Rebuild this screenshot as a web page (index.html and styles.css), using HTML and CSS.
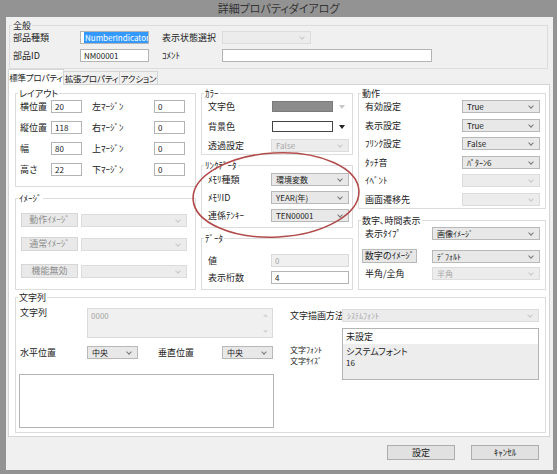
FILE: index.html
```html
<!DOCTYPE html>
<html lang="ja">
  <head>
    <meta charset="UTF-8" />
    <title>詳細プロパティダイアログ</title>
    <link rel="stylesheet" href="styles.css">
  </head>
  <body>
    <div class="window">
      <div class="titlebar">詳細プロパティダイアログ</div>
      <div class="dlg">
        <fieldset class="grp general">
          <legend>全般</legend>
          <div class="row gen-row">
            <span class="lbl w-gen">部品種類</span>
            <span class="tb w-gid"><span class="hl">NumberIndicator</span></span>
            <span class="lbl w-gen2">表示状態選択</span>
            <span class="sel dis w-state"></span>
          </div>
          <div class="row gen-row">
            <span class="lbl w-gen">部品ID</span>
            <span class="tb w-gid">NM00001</span>
            <span class="lbl w-gen2">ｺﾒﾝﾄ</span>
            <span class="tb w-comment"></span>
          </div>
        </fieldset>

        <div class="tabs">
          <span class="tab active t1">標準プロパティ</span>
          <span class="tab t2">拡張プロパティ</span>
          <span class="tab t3">アクション</span>
        </div>

        <div class="panel">
          <div class="cols">
            <div class="col col-left">
              <fieldset class="grp layout">
                <legend>レイアウト</legend>
                <div class="row"><span class="lbl w31">横位置</span><span class="tb w31">20</span><span class="lbl w62 ml10">左ﾏｰｼﾞﾝ</span><span class="tb w31">0</span></div>
                <div class="row"><span class="lbl w31">縦位置</span><span class="tb w31">118</span><span class="lbl w62 ml10">右ﾏｰｼﾞﾝ</span><span class="tb w31">0</span></div>
                <div class="row"><span class="lbl w31">幅</span><span class="tb w31">80</span><span class="lbl w62 ml10">上ﾏｰｼﾞﾝ</span><span class="tb w31">0</span></div>
                <div class="row"><span class="lbl w31">高さ</span><span class="tb w31">22</span><span class="lbl w62 ml10">下ﾏｰｼﾞﾝ</span><span class="tb w31">0</span></div>
              </fieldset>
              <fieldset class="grp image">
                <legend>ｲﾒｰｼﾞ</legend>
                <div class="row img-row"><span class="btn dis w57">動作ｲﾒｰｼﾞ</span><span class="sel dis w106"></span></div>
                <div class="row img-row r2"><span class="btn dis w57">通常ｲﾒｰｼﾞ</span><span class="sel dis w106"></span></div>
                <div class="row img-row r3"><span class="btn dis w57">機能無効</span><span class="sel dis w106"></span></div>
              </fieldset>
            </div>

            <div class="col col-mid">
              <fieldset class="grp color">
                <legend>ｶﾗｰ</legend>
                <div class="row"><span class="lbl w63">文字色</span><span class="cbox"><span class="swatch gray"></span><span class="tri light"></span></span></div>
                <div class="row r-c2"><span class="lbl w63">背景色</span><span class="cbox"><span class="swatch white"></span><span class="tri"></span></span></div>
                <div class="row r-c3"><span class="lbl w63">透過設定</span><span class="sel dis w78">False</span></div>
              </fieldset>
              <fieldset class="grp link">
                <legend>ﾘﾝｸﾃﾞｰﾀ</legend>
                <div class="row"><span class="lbl w63">ﾒﾓﾘ種類</span><span class="sel w78">環境変数</span></div>
                <div class="row"><span class="lbl w63">ﾒﾓﾘID</span><span class="sel w78">YEAR(年)</span></div>
                <div class="row"><span class="lbl w63">連係ﾃﾝｷｰ</span><span class="sel w78">TEN00001</span></div>
              </fieldset>
              <fieldset class="grp data">
                <legend>ﾃﾞｰﾀ</legend>
                <div class="row"><span class="lbl w63">値</span><span class="tb dis w78">0</span></div>
                <div class="row"><span class="lbl w63">表示桁数</span><span class="tb w78">4</span></div>
              </fieldset>
            </div>

            <div class="col col-right">
              <fieldset class="grp action">
                <legend>動作</legend>
                <div class="row"><span class="lbl w97">有効設定</span><span class="sel w78">True</span></div>
                <div class="row"><span class="lbl w97">表示設定</span><span class="sel w78">True</span></div>
                <div class="row"><span class="lbl w97">ﾌﾘﾝｸ設定</span><span class="sel w78">False</span></div>
                <div class="row"><span class="lbl w97">ﾀｯﾁ音</span><span class="sel w78">ﾊﾟﾀｰﾝ6</span></div>
                <div class="row"><span class="lbl w97">ｲﾍﾞﾝﾄ</span><span class="sel dis w78"></span></div>
                <div class="row"><span class="lbl w97">画面遷移先</span><span class="sel dis w78"></span></div>
              </fieldset>
              <fieldset class="grp digits">
                <legend>数字､時間表示</legend>
                <div class="row"><span class="lbl w67">表示ﾀｲﾌﾟ</span><span class="sel w108">画像ｲﾒｰｼﾞ</span></div>
                <div class="row btn-row"><span class="btn w55">数字のｲﾒｰｼﾞ</span><span class="sel w108">ﾃﾞﾌｫﾙﾄ</span></div>
                <div class="row"><span class="lbl w67">半角/全角</span><span class="sel dis w108">半角</span></div>
              </fieldset>
            </div>
          </div>

          <fieldset class="grp strings">
            <legend>文字列</legend>
            <div class="str-body">
              <div class="str-left">
                <div class="str-text">
                  <span class="lbl w67">文字列</span>
                  <span class="ta dis">0000<span class="sb-up"></span><span class="sb-down"></span></span>
                </div>
                <div class="row str-pos">
                  <span class="lbl w67">水平位置</span><span class="sel w51">中央</span>
                  <span class="lbl w64 ml20">垂直位置</span><span class="sel w51">中央</span>
                </div>
                <div class="bigta"></div>
              </div>
              <div class="str-right">
                <div class="row draw-row"><span class="lbl w52">文字描画方法</span><span class="sel dis w197">ｼｽﾃﾑﾌｫﾝﾄ</span></div>
                <div class="font-row">
                  <div class="font-lbls"><div>文字ﾌｫﾝﾄ</div><div>文字ｻｲｽﾞ</div></div>
                  <div class="listbox">
                    <div class="li-top">未設定</div>
                    <div class="li-info">システムフォント</div>
                    <div class="li-info small">16</div>
                  </div>
                </div>
              </div>
            </div>
          </fieldset>
        </div>

        <div class="footer">
          <span class="pbtn">設定</span>
          <span class="pbtn">ｷｬﾝｾﾙ</span>
        </div>
      </div>

      <svg class="mark" width="176" height="98" viewBox="0 0 176 98">
        <ellipse cx="88" cy="49" rx="83" ry="42" fill="none" stroke="#b24a4a" stroke-width="1.6" transform="rotate(-3 88 49)" />
      </svg>
    </div>
  </body>
</html>
```

FILE: styles.css
```css
* {
  box-sizing: border-box;
}
body {
  margin: 0;
  font-family: "Noto Sans CJK JP", "Noto Sans", sans-serif;
  font-size: 9px;
  color: #222;
}

.window {
  position: relative;
  width: 557px;
  height: 474px;
  background: #939393;
  display: flex;
  flex-direction: column;
  overflow: hidden;
}
.titlebar {
  height: 17px;
  line-height: 16px;
  text-align: center;
  font-size: 11px;
  color: #333;
  font-feature-settings: "palt";
}
.dlg {
  flex: 1;
  margin: 0 4px 4px 6px;
  background: #f0f0f0;
  padding: 3px 0 0 2px;
  display: flex;
  flex-direction: column;
}

/* group boxes */
.grp {
  margin: 0;
  padding: 0;
  border: 1px solid #dcdcdc;
  min-width: 0;
}
.grp > legend {
  margin-left: 2px;
  padding: 0 1px;
  height: 11px;
  line-height: 11px;
  white-space: nowrap;
}

/* controls */
.row {
  display: flex;
  align-items: center;
  height: 13px;
}
.lbl {
  flex: none;
  white-space: nowrap;
  line-height: 11px;
}
.tb,
.sel,
.btn,
.cbox {
  flex: none;
  display: block;
  height: 13px;
  line-height: 11px;
  white-space: nowrap;
  overflow: hidden;
  font-size: 8px;
}
.tb {
  border: 1px solid #b4b4b4;
  background: #fff;
  padding-left: 3px;
}
.tb.dis {
  background: #f0f0f0;
  border-color: #dadada;
  color: #a6a6a6;
}
.sel {
  position: relative;
  border: 1px solid #b8b8b8;
  background: #e8e8e8;
  padding-left: 4px;
}
.sel::after {
  content: "";
  position: absolute;
  right: 6px;
  top: 3px;
  width: 3px;
  height: 3px;
  border-right: 1px solid #777;
  border-bottom: 1px solid #777;
  transform: rotate(45deg);
}
.sel.dis {
  background: #ececec;
  border-color: #dcdcdc;
  color: #a6a6a6;
}
.sel.dis::after {
  border-color: #c8c8c8;
}
.btn {
  border: 1px solid #b8b8b8;
  background: #e6e6e6;
  text-align: center;
  height: 14px;
  line-height: 12px;
  font-size: 9px;
}
.btn.dis {
  border-color: #d6d6d6;
  background: #e9e9e9;
  color: #8d8d8d;
}

.w31 { width: 31px; }
.w51 { width: 51px; }
.w52 { width: 52px; }
.w55 { width: 55px; }
.w57 { width: 57px; }
.w62 { width: 62px; }
.w63 { width: 63px; }
.w64 { width: 64px; }
.w67 { width: 67px; }
.w78 { width: 78px; }
.w97 { width: 97px; }
.w106 { width: 106px; }
.w108 { width: 108px; }
.w197 { width: 197px; }
.ml10 { margin-left: 10px; }
.ml20 { margin-left: 20px; }

/* general */
.general {
  margin-left: 1px;
  width: 539px;
  padding-bottom: 6px;
}
.gen-row {
  padding-left: 3px;
}
.gen-row + .gen-row {
  margin-top: 5px;
}
.w-gen { width: 67px; }
.w-gid { width: 69px; }
.w-gen2 { width: 60px; margin-left: 13px; }
.w-state { width: 89px; }
.w-comment { width: 210px; }
.hl {
  background: #3399ff;
  color: #fff;
  padding: 0 1px;
}

/* tabs */
.tabs {
  display: flex;
  align-items: flex-end;
  height: 15px;
  position: relative;
  z-index: 1;
}
.tab {
  height: 13px;
  line-height: 12px;
  border: 1px solid #d5d5d5;
  border-bottom: 0;
  background: #f0f0f0;
  text-align: center;
  margin-left: -1px;
  font-size: 8.5px;
  letter-spacing: -0.2px;
  white-space: nowrap;
  font-feature-settings: "palt";
}
.tab.active {
  height: 16px;
  line-height: 15px;
  margin: 0 0 -1px 0;
  background: #fff;
}
.t1 { width: 56px; }
.t2 { width: 57px; }
.t3 { width: 39px; }

.panel {
  width: 542px;
  height: 353px;
  border: 1px solid #d5d5d5;
  background: #fff;
  padding: 3px 0 0 6px;
}
.cols {
  display: flex;
  gap: 5px;
}
.col {
  display: flex;
  flex-direction: column;
}
.col-left { width: 181px; }
.col-mid { width: 152px; }
.col-right { width: 188px; }

/* layout */
.layout {
  padding: 1px 0 10px 4px;
}
.layout > legend {
  margin-left: -2px;
  font-feature-settings: "palt";
}
.layout .row + .row { margin-top: 8px; }

.image {
  margin-top: 6px;
  padding: 9px 0 11px 5px;
}
.image > legend { margin-left: -3px; }
.img-row { height: 14px; gap: 3px; }
.img-row.r2 { margin-top: 10px; }
.img-row.r3 { margin-top: 13px; }

/* middle */
.color,
.link,
.data {
  padding-left: 6px;
}
.color > legend,
.link > legend,
.data > legend {
  margin-left: -4px;
}
.color {
  padding-top: 1px;
  padding-bottom: 2px;
}
.r-c2 { margin-top: 7px; }
.r-c3 { margin-top: 6px; }
.cbox {
  width: 78px;
  display: flex;
  align-items: center;
  gap: 4px;
  padding-left: 1px;
}
.swatch {
  width: 61px;
  height: 11px;
}
.swatch.gray {
  background: #8c8c8c;
  border: 1px solid #7a7a7a;
}
.swatch.white {
  background: #fff;
  border: 1px solid #444;
}
.tri {
  width: 0;
  height: 0;
  border-left: 3px solid transparent;
  border-right: 3px solid transparent;
  border-top: 4px solid #222;
  margin-left: 2px;
}
.tri.light {
  border-top-color: #c8c8c8;
}

.link {
  margin-top: 5px;
  padding-top: 2px;
  padding-bottom: 5px;
}
.link .row + .row { margin-top: 5px; }

.data {
  margin-top: 5px;
  padding-top: 10px;
  padding-bottom: 5px;
}
.data .row + .row { margin-top: 4px; }

/* right */
.action {
  padding: 1px 0 2px 6px;
}
.action > legend { margin-left: -4px; }
.action .row:nth-child(odd) { margin-top: 6px; }
.action .row:nth-child(even) { margin-top: 5px; }
.action .row:nth-child(2) { margin-top: 0; }

.digits {
  margin-top: 6px;
  padding: 1px 0 9px 6px;
}
.digits > legend { margin-left: -4px; }
.digits .btn-row {
  height: 14px;
  margin: 9px 0 4px -3px;
  gap: 15px;
}

/* strings */
.strings {
  margin-top: 2px;
  width: 531px;
  padding-bottom: 4px;
}
.str-body {
  display: flex;
  padding-left: 4px;
}
.str-left {
  width: 254px;
}
.str-text {
  display: flex;
  margin-top: 5px;
}
.str-text .lbl {
  margin-top: -1px;
}
.ta {
  position: relative;
  display: block;
  width: 186px;
  height: 30px;
  border: 1px solid #dadada;
  background: #f0f0f0;
  color: #a6a6a6;
  font-size: 8px;
  padding: 1px 3px;
  line-height: 11px;
}
.sb-up,
.sb-down {
  position: absolute;
  right: 5px;
  width: 3px;
  height: 3px;
  border-left: 1px solid #c8c8c8;
  border-top: 1px solid #c8c8c8;
}
.sb-up {
  top: 6px;
  transform: rotate(45deg);
}
.sb-down {
  bottom: 5px;
  transform: rotate(225deg);
}
.str-pos {
  margin-top: 8px;
}
.bigta {
  margin: 15px 0 0 -1px;
  width: 255px;
  height: 54px;
  border: 1px solid #b4b4b4;
  background: #fff;
}
.str-right {
  margin-left: 16px;
}
.draw-row {
  margin-top: 6px;
}
.font-row {
  display: flex;
  margin-top: 6px;
}
.font-lbls {
  width: 52px;
  padding-top: 16px;
  font-size: 8px;
  line-height: 11px;
}
.listbox {
  width: 197px;
  height: 52px;
  border: 1px solid #b4b4b4;
  background: #ededed;
  font-feature-settings: "palt";
}
.li-top {
  height: 15px;
  line-height: 15px;
  background: #fff;
  padding-left: 3px;
}
.li-info {
  padding-left: 3px;
  line-height: 11px;
}
.li-info:nth-child(2) {
  margin-top: 2px;
}
.li-info.small {
  font-size: 8px;
}

/* footer */
.footer {
  flex: 1;
  display: flex;
  justify-content: flex-end;
  align-items: flex-start;
  gap: 16px;
  padding: 8px 14px 0 0;
}
.pbtn {
  width: 68px;
  height: 15px;
  line-height: 13px;
  border: 1px solid #adadad;
  background: #e1e1e1;
  text-align: center;
}

.mark {
  position: absolute;
  left: 188px;
  top: 146px;
}
```
